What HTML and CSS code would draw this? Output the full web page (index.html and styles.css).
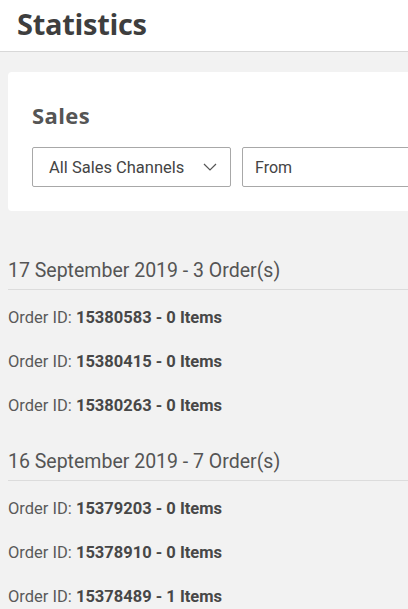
FILE: index.html
```html
<!DOCTYPE html>
<html lang="en">
<head>
<meta charset="utf-8">
<title>Statistics</title>
<link rel="stylesheet" href="styles.css">
</head>
<body>
<div class="page">
  <header class="topbar">
    <h1 class="page-title">Statistics</h1>
  </header>

  <section class="card">
    <h2 class="card-title">Sales</h2>
    <div class="filters">
      <div class="select">
        <span class="select-label">All Sales Channels</span>
        <svg class="chevron" width="14" height="8" viewBox="0 0 14 8" aria-hidden="true">
          <path d="M1 1 L7 7 L13 1" fill="none" stroke="#555" stroke-width="1.2"/>
        </svg>
      </div>
      <div class="input">From</div>
    </div>
  </section>

  <div class="orders">
    <section class="group">
      <h3 class="group-title">17 September 2019 - 3 Order(s)</h3>
      <div class="row">Order ID: <b>15380583 - 0 Items</b></div>
      <div class="row">Order ID: <b>15380415 - 0 Items</b></div>
      <div class="row">Order ID: <b>15380263 - 0 Items</b></div>
    </section>
    <section class="group">
      <h3 class="group-title">16 September 2019 - 7 Order(s)</h3>
      <div class="row">Order ID: <b>15379203 - 0 Items</b></div>
      <div class="row">Order ID: <b>15378910 - 0 Items</b></div>
      <div class="row">Order ID: <b>15378489 - 1 Items</b></div>
    </section>
  </div>
</div>
</body>
</html>
```

FILE: styles.css
```css
html, body {
  margin: 0;
  padding: 0;
}

body {
  background: #f2f2f2;
  font-family: Roboto, "Liberation Sans", sans-serif;
  color: #555;
}

.page {
  width: 408px;
  height: 609px;
  overflow: hidden;
}

.topbar {
  background: #fff;
  height: 51px;
  border-bottom: 1px solid #d8d8d8;
  padding-left: 17px;
}

.page-title {
  margin: 0;
  font-family: "Open Sans", sans-serif;
  font-weight: 700;
  font-size: 29px;
  letter-spacing: -0.3px;
  line-height: 47px;
  color: #3e3e3e;
}

.card {
  background: #fff;
  margin: 20px 0 0 8px;
  width: 440px;
  border-radius: 4px;
  padding: 29px 24px 24px 24px;
  box-sizing: border-box;
}

.card-title {
  margin: 0 0 18px 0;
  font-family: "Open Sans", sans-serif;
  font-weight: 700;
  font-size: 22px;
  letter-spacing: 0.4px;
  line-height: 28px;
  color: #555;
}

.filters {
  display: flex;
  gap: 11px;
}

.select,
.input {
  height: 40px;
  box-sizing: border-box;
  border: 1px solid #a8a8a8;
  border-radius: 2px;
  display: flex;
  align-items: center;
  font-size: 16px;
  color: #444;
}

.select {
  width: 199px;
  padding: 0 13px 0 16px;
  justify-content: space-between;
}

.select-label {
  font-size: 16.5px;
}

.input {
  flex: 1;
  padding-left: 12px;
}

.chevron {
  display: block;
}

.orders {
  padding-top: 48px;
}

.group + .group {
  margin-top: 22px;
}

.group-title {
  margin: 0 0 6px 8px;
  padding-bottom: 6px;
  border-bottom: 1px solid #dcdcdc;
  font-weight: 400;
  font-size: 19.5px;
  line-height: 24px;
  color: #555;
}

.row {
  padding-left: 8px;
  font-size: 16.5px;
  line-height: 44px;
  color: #5a5a5a;
}

.row b {
  font-weight: 700;
  color: #474747;
}
```
